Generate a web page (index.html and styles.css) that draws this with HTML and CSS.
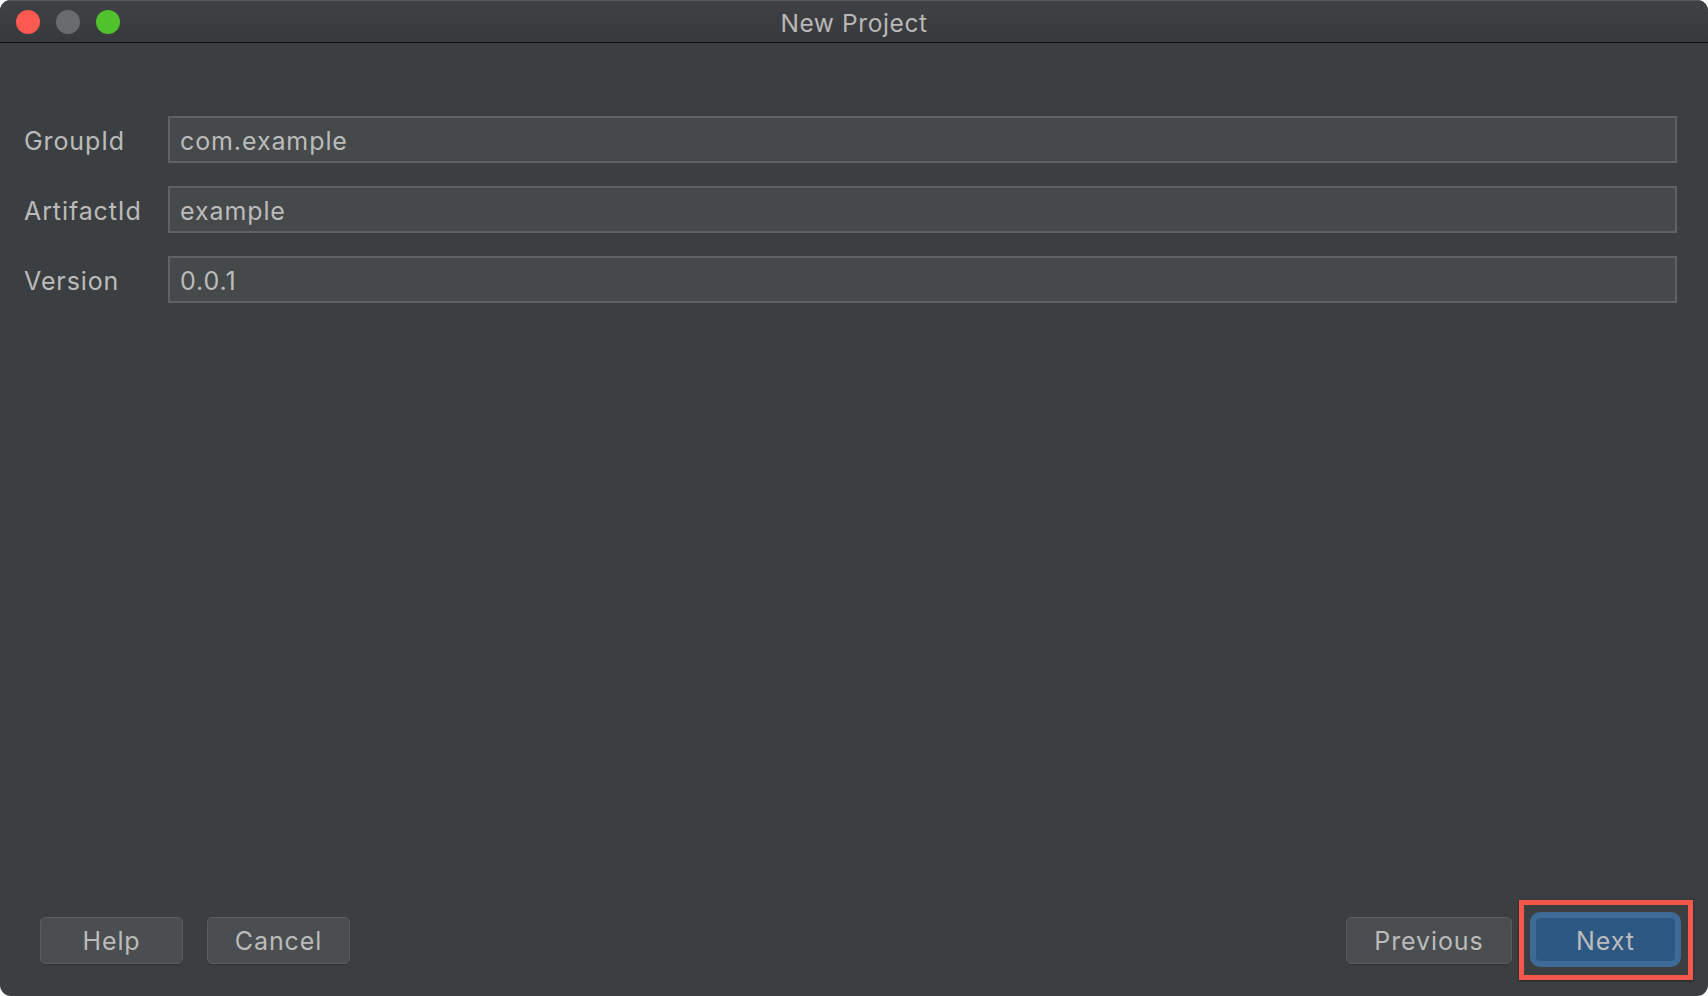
FILE: index.html
```html
<!DOCTYPE html>
<html lang="en">
<head>
<meta charset="utf-8">
<title>New Project</title>
<link rel="stylesheet" href="styles.css">
</head>
<body>
<div class="window">
  <div class="titlebar">
    <div class="lights">
      <span class="light red"></span>
      <span class="light gray"></span>
      <span class="light green"></span>
    </div>
    <div class="title">New Project</div>
  </div>
  <div class="form">
    <label class="label">GroupId</label>
    <div class="field">com.example</div>
    <label class="label">ArtifactId</label>
    <div class="field">example</div>
    <label class="label">Version</label>
    <div class="field">0.0.1</div>
  </div>
  <div class="footer">
    <div class="left">
      <button class="btn">Help</button>
      <button class="btn">Cancel</button>
    </div>
    <div class="right">
      <button class="btn btn-prev">Previous</button>
      <div class="highlight">
        <button class="btn btn-primary">Next</button>
      </div>
    </div>
  </div>
</div>
</body>
</html>
```

FILE: styles.css
```css
html, body {
  margin: 0;
  padding: 0;
  background: #ffffff;
}
body {
  font-family: Inter, "Open Sans", "Liberation Sans", sans-serif;
  color: #bbbbbb;
}
.window {
  width: 1708px;
  height: 996px;
  background: #3c3f41;
  border-radius: 11px;
  overflow: hidden;
  display: flex;
  flex-direction: column;
}
.titlebar {
  height: 43px;
  flex: 0 0 43px;
  box-sizing: border-box;
  background: linear-gradient(#404144, #38393c);
  border-top: 1px solid #58595b;
  border-bottom: 1px solid #111111;
  position: relative;
  display: flex;
  align-items: center;
  justify-content: center;
}
.lights {
  position: absolute;
  left: 16px;
  top: 9px;
  display: flex;
  gap: 16px;
}
.light {
  width: 24px;
  height: 24px;
  border-radius: 50%;
  display: block;
}
.light.red { background: #fe5950; }
.light.gray { background: #6a6b6d; }
.light.green { background: #50c22c; }
.title {
  font-size: 24.5px;
  color: #b8b8b8;
  letter-spacing: 0.6px;
  margin-top: 2px;
}
.form {
  display: grid;
  grid-template-columns: 144px 1fr;
  row-gap: 23px;
  padding: 73px 31px 0 24px;
  align-items: center;
}
.label {
  font-size: 25px;
  color: #bbbbbb;
  letter-spacing: 0.9px;
  padding-top: 2px;
}
.field {
  height: 47px;
  box-sizing: border-box;
  border: 2px solid #5f6162;
  background: #45494a;
  padding: 2px 10px 0 10px;
  display: flex;
  align-items: center;
  font-size: 25px;
  letter-spacing: 0.9px;
  color: #bbbbbb;
}
.footer {
  margin-top: auto;
  display: flex;
  justify-content: space-between;
  align-items: center;
  padding: 0 15px 16px 40px;
}
.left, .right {
  display: flex;
  align-items: center;
}
.left { gap: 24px; }
.btn {
  font-family: Inter, "Open Sans", "Liberation Sans", sans-serif;
  font-size: 25px;
  letter-spacing: 0.9px;
  color: #bbbbbb;
  height: 47px;
  width: 143px;
  box-sizing: border-box;
  background: #4a4e50;
  border: 1px solid #5b5e60;
  border-radius: 5px;
  box-shadow: 0 1px 1px rgba(0, 0, 0, 0.25);
  padding: 2px 0 0 0;
}
.btn-prev {
  width: 166px;
  margin-right: 7px;
}
.highlight {
  border: 5px solid #f5574b;
  padding: 11px 11px 12px 10px;
  box-shadow: 0 1px 2px rgba(0, 0, 0, 0.5);
}
.btn-primary {
  display: block;
  background: #2c5883;
  border: 2px solid #3e6c98;
  border-radius: 6px;
  box-shadow: 0 0 0 4px #3d6a96;
  color: #bcbcbc;
}
```
